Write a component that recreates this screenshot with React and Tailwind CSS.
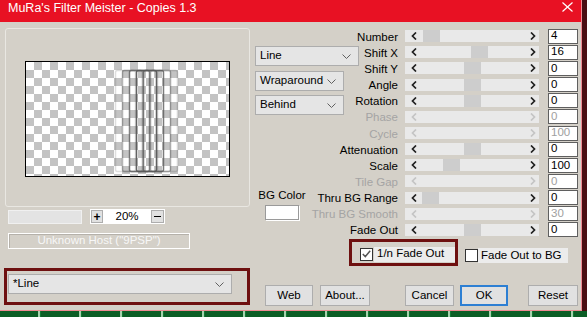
import React from 'react';

const params = [
  { label: 'Number', value: '4', thumb: 1 },
  { label: 'Shift X', value: '16', thumb: 49 },
  { label: 'Shift Y', value: '0', thumb: 42 },
  { label: 'Angle', value: '0', thumb: 42 },
  { label: 'Rotation', value: '0', thumb: 42 },
  { label: 'Phase', value: '0', off: true },
  { label: 'Cycle', value: '100', off: true },
  { label: 'Attenuation', value: '0', thumb: 42 },
  { label: 'Scale', value: '100', thumb: 21 },
  { label: 'Tile Gap', value: '0', off: true },
  { label: 'Thru BG Range', value: '0', thumb: 0 },
  { label: 'Thru BG Smooth', value: '30', off: true },
  { label: 'Fade Out', value: '0', thumb: 42 },
];

const Arrow = ({ dir, off }) => (
  <svg width="6" height="8" viewBox="0 0 6 8">
    <polyline
      points={dir === 'left' ? '5,0.5 1.5,4 5,7.5' : '1,0.5 4.5,4 1,7.5'}
      fill="none"
      stroke={off ? '#c4c4c4' : '#202020'}
      strokeWidth="1.7"
    />
  </svg>
);

const Chevron = () => (
  <svg width="9" height="5" viewBox="0 0 9 5">
    <polyline points="0.5,0.5 4.5,4.5 8.5,0.5" fill="none" stroke="#606060" strokeWidth="1" />
  </svg>
);

const Combo = ({ text, w }) => (
  <div className={`${w} h-[20px] flex items-center justify-between pl-[4px] pr-[7px] bg-[#e5e5e5] border border-[#adadad] text-[11.5px] text-black`}>
    <span>{text}</span>
    <Chevron />
  </div>
);

const Check = ({ checked }) => (
  <div className="w-[13px] h-[13px] bg-white border border-[#333333] flex items-center justify-center shrink-0">
    {checked && (
      <svg width="9" height="8" viewBox="0 0 9 8">
        <polyline points="0.8,4 3.3,6.6 8.2,0.8" fill="none" stroke="#555555" strokeWidth="1.5" />
      </svg>
    )}
  </div>
);

const Button = ({ text, w, ok }) => (
  <div
    className={`${w} h-[21px] flex items-center justify-center bg-[#e1e1e1] text-[11.5px] text-black ${
      ok ? 'border-2 border-[#2d7fd3]' : 'border border-[#adadad]'
    }`}
  >
    {text}
  </div>
);

const Preview = () => (
  <div className="relative w-[205px] h-[116px] border border-black bg-[repeating-conic-gradient(#c3c3c3_0%_25%,#ffffff_0%_50%)] bg-[length:16px_16px]">
    <svg className="absolute left-0 top-0" width="203" height="114">
      {[0.2, 0.45, 0.75, 0.95, 0.8, 0.5, 0.25].map((o, i) => (
        <rect
          key={i}
          x={89.5 + i * 7}
          y={8.5}
          width={20}
          height={101}
          rx={2}
          fill="none"
          stroke="#5a5a5a"
          strokeOpacity={o}
          strokeWidth="1.5"
        />
      ))}
    </svg>
  </div>
);

const App = () => {
  return (
    <div className="w-[587px] h-[317px] overflow-hidden flex flex-col bg-[#3a0b0e] font-['Liberation_Sans',Arial,sans-serif]">
      <div className="flex h-[311px]">
        <div className="w-[582px] h-[311px] flex flex-col bg-[#d4d0c8] border-r border-b border-[#ee8a93]">
          {/* title bar */}
          <div className="h-[22px] shrink-0 bg-[#e81123] flex items-start justify-between pl-[8px] pr-[8px]">
            <span className="text-white text-[12.5px] leading-[14px] mt-[1px]">MuRa's Filter Meister - Copies 1.3</span>
            <svg className="mt-[2px]" width="11" height="10" viewBox="0 0 11 10">
              <line x1="0.5" y1="0.5" x2="10.5" y2="9.5" stroke="white" strokeWidth="1.2" />
              <line x1="10.5" y1="0.5" x2="0.5" y2="9.5" stroke="white" strokeWidth="1.2" />
            </svg>
          </div>

          <div className="flex pl-[4px] pt-[6px]">
            {/* left column */}
            <div className="w-[246px] flex flex-col">
              <div className="ml-[1px] w-[245px] h-[179px] border border-[#e9e7e2] rounded-[3px] flex items-center justify-center pt-[3px]">
                <Preview />
              </div>
              <div className="mt-[2px] ml-[4px] flex items-center h-[15px]">
                <div className="w-[74px] h-[14px] bg-[#e3e3e3] border border-[#f0f0f0]" />
                <div className="ml-[8px] w-[75px] h-[15px] bg-white flex items-center justify-between px-[1px]">
                  <div className="w-[12px] h-[13px] bg-[#e1e1e1] border border-[#adadad] flex items-center justify-center text-[12px] font-bold leading-none">+</div>
                  <span className="text-[11.5px] text-black">20%</span>
                  <div className="w-[13px] h-[13px] bg-[#e1e1e1] border border-[#adadad] flex items-center justify-center">
                    <div className="w-[7px] h-[1.5px] bg-black" />
                  </div>
                </div>
              </div>
              <div className="mt-[9px] ml-[4px] w-[182px] h-[16px] border border-white shadow-[inset_1px_1px_0_#b5b1aa] flex items-center justify-center text-[11.5px] text-[#f7f7f7]">
                Unknown Host ("9PSP")
              </div>
              <div className="mt-[19px] w-[246px] h-[37px] border-[3px] border-[#6e1010] pl-[1px] pt-[3px]">
                <Combo text="*Line" w="w-[224px]" />
              </div>
            </div>

            {/* right area */}
            <div className="ml-[5px] flex flex-col">
              <div className="flex">
                <div className="w-[104px] flex flex-col pt-[18px]">
                  <Combo text="Line" w="w-[104px]" />
                  <div className="mt-[5px]">
                    <Combo text="Wraparound" w="w-[89px]" />
                  </div>
                  <div className="mt-[4px]">
                    <Combo text="Behind" w="w-[89px]" />
                  </div>
                  <div className="mt-[73px] w-[54px] flex flex-col items-center">
                    <span className="text-[11.5px] text-black leading-[14px]">BG Color</span>
                    <div className="mt-[3px] w-[34px] h-[15px] bg-white border border-[#9a9a9a] shadow-[1px_1px_0_#ffffff]" />
                  </div>
                </div>
                <div className="flex flex-col">
                  {params.map((p) => (
                    <div key={p.label} className="h-[16.17px] flex items-center">
                      <div className="w-[39px] flex justify-end">
                        <span className={`whitespace-nowrap text-[11.5px] leading-[14px] mt-[1px] ${p.off ? 'text-[#a4a4a4]' : 'text-black'}`}>
                          {p.label}
                        </span>
                      </div>
                      <div className="ml-[7px] w-[134px] h-[12px] bg-[#e9e9e9] flex items-center">
                        <div className="w-[17px] flex justify-center">
                          <Arrow dir="left" off={p.off} />
                        </div>
                        <div className="flex-1 h-full">
                          {!p.off && <div className="w-[17px] h-full bg-[#cdcdcd]" style={{ marginLeft: p.thumb }} />}
                        </div>
                        <div className="w-[17px] flex justify-start pl-[8px]">
                          <Arrow dir="right" off={p.off} />
                        </div>
                      </div>
                      <div
                        className={`ml-[9px] w-[30px] h-[15px] bg-white border border-[#5f5f5f] flex items-center pl-[2px] text-[11.5px] leading-none ${
                          p.off ? 'text-[#a0a0a0]' : 'text-black'
                        }`}
                      >
                        {p.value}
                      </div>
                    </div>
                  ))}
                </div>
              </div>

              {/* checkboxes */}
              <div className="mt-[1px] flex items-start">
                <div className="ml-[94px] w-[109px] h-[27px] border-[3px] border-[#6e1010] flex items-center pl-[8px] pt-[3px]">
                  <Check checked />
                  <span className="ml-[1px] pl-[3px] pr-[2px] h-[15px] w-[81px] bg-[#ececec] flex items-center text-[11.5px] text-black">1/n Fade Out</span>
                </div>
                <div className="ml-[7px] mt-[9px] flex items-center">
                  <Check />
                  <span className="pl-[3px] pr-[6px] h-[15px] bg-[#ececec] flex items-center text-[11.5px] text-black">Fade Out to BG</span>
                </div>
              </div>

              {/* buttons */}
              <div className="mt-[19px] flex">
                <div className="ml-[10px]"><Button text="Web" w="w-[48px]" /></div>
                <div className="ml-[7px]"><Button text="About..." w="w-[50px]" /></div>
                <div className="ml-[35px]"><Button text="Cancel" w="w-[49px]" /></div>
                <div className="ml-[6px]"><Button text="OK" w="w-[48px]" ok /></div>
                <div className="ml-[20px]"><Button text="Reset" w="w-[50px]" /></div>
              </div>
            </div>
          </div>
        </div>
        <div className="flex-1 bg-[#4a0d12]" />
      </div>
      <div className="h-[6px] bg-[repeating-linear-gradient(90deg,#0c5e26_0px,#0c5e26_38px,#a6d2ae_38px,#a6d2ae_40px,#127a34_40px,#127a34_41px)]" />
    </div>
  );
};

export default App;
